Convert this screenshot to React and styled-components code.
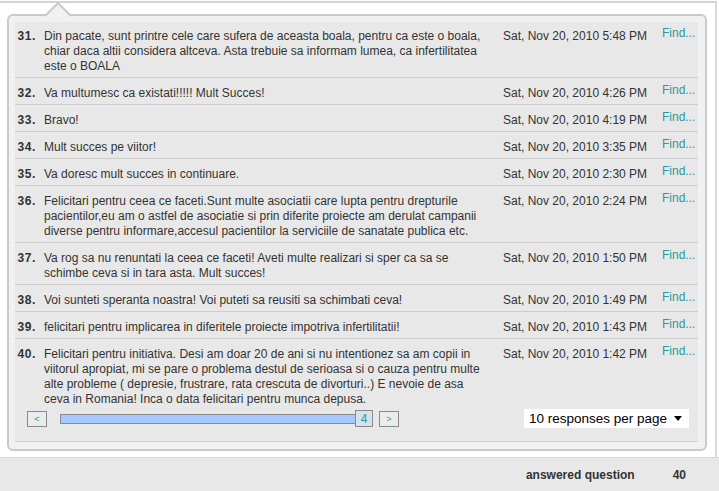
import * as React from 'react';
import styled, { createGlobalStyle } from 'styled-components';

const Global = createGlobalStyle`
body{
  margin:0;
  background:#ffffff;
  font-family:"Liberation Sans", Arial, sans-serif;
  font-size:12px;
  color:#333;
}
`;

const Page = styled.div`
width:719px;
height:491px;
display:flex;
flex-direction:column;
overflow:hidden;
`;
const Popup = styled.div`
margin-top:1px;
width:717px;
border-top:2px solid #d3d3d3;
border-right:2px solid #d9d9d9;
padding:11px 8px 6px 7px;
box-sizing:border-box;
`;
const Panel = styled.div`
position:relative;
border:2px solid #c9c9c9;
border-radius:6px;
background:#f1f1f1;
padding:6px 7px 7px 6px;
`;
const Arrow = styled.svg`
position:absolute;
left:35px;
top:-14px;
`;
const Inner = styled.div`
background:#e8e8e8;
border-bottom:1px solid #cfcfcf;
`;
const Row = styled.div`
display:grid;
grid-template-columns:29px 459px 159px 1fr;
padding:7.5px 0 ${p => (p.$last ? '0' : '3.5px')};
border-bottom:1px solid ${p => (p.$last ? 'transparent' : '#cdcdcd')};
line-height:15px;
&:first-child{
  padding-top:6.5px;
}
`;
const Num = styled.div`
font-weight:bold;
text-align:right;
padding-right:8px;
letter-spacing:0.6px;
color:#333;
`;
const Text = styled.div`
color:#333;
padding-right:13px;
`;
const Date = styled.div`
color:#333;
white-space:nowrap;
`;
const Find = styled.a`
color:#2b9a9a;
margin-top:-3px;
cursor:pointer;
`;
const Pager = styled.div`
display:flex;
align-items:center;
padding:2px 9px 13px 12px;
height:18px;
`;
const PageBtn = styled.div`
width:18px;
height:14px;
border:1px solid #8a8a8a;
background:#ececec;
color:#2b9a9a;
font-size:9px;
display:flex;
align-items:center;
justify-content:center;
`;
const Track = styled.div`
margin-left:13px;
width:295px;
height:8px;
border:1px solid #8a8a8a;
background:#a5c8ff;
`;
const Handle = styled.div`
width:16px;
height:15px;
margin-left:-2px;
margin-right:6px;
border:1px solid #8a8a8a;
background:#d5e2ee;
color:#2b9a9a;
font-size:12px;
display:flex;
align-items:center;
justify-content:center;
`;
const Select = styled.div`
margin-left:auto;
width:165px;
height:19px;
background:#fff;
display:flex;
align-items:center;
justify-content:space-between;
padding:0 7px 0 5px;
box-sizing:border-box;
font-size:13.5px;
color:#000;
`;
const Footer = styled.div`
flex:1;
background:#e8e8e8;
border-top:1px solid #d8d8d8;
display:flex;
justify-content:flex-end;
align-items:flex-start;
padding:10px 33px 0 0;
font-weight:bold;
color:#333;
`;
const Label = styled.span`
margin-right:38px;
`;

const rows = [
  [31, 'Din pacate, sunt printre cele care sufera de aceasta boala, pentru ca este o boala, chiar daca altii considera altceva. Asta trebuie sa informam lumea, ca infertilitatea este o BOALA', '5:48 PM'],
  [32, 'Va multumesc ca existati!!!!! Mult Succes!', '4:26 PM'],
  [33, 'Bravo!', '4:19 PM'],
  [34, 'Mult succes pe viitor!', '3:35 PM'],
  [35, 'Va doresc mult succes in continuare.', '2:30 PM'],
  [36, 'Felicitari pentru ceea ce faceti.Sunt multe asociatii care lupta pentru drepturile pacientilor,eu am o astfel de asociatie si prin diferite proiecte am derulat campanii diverse pentru informare,accesul pacientilor la serviciile de sanatate publica etc.', '2:24 PM'],
  [37, 'Va rog sa nu renuntati la ceea ce faceti! Aveti multe realizari si sper ca sa se schimbe ceva si in tara asta. Mult succes!', '1:50 PM'],
  [38, 'Voi sunteti speranta noastra! Voi puteti sa reusiti sa schimbati ceva!', '1:49 PM'],
  [39, 'felicitari pentru implicarea in diferitele proiecte impotriva infertilitatii!', '1:43 PM'],
  [40, 'Felicitari pentru initiativa. Desi am doar 20 de ani si nu intentionez sa am copii in viitorul apropiat, mi se pare o problema destul de serioasa si o cauza pentru multe alte probleme ( depresie, frustrare, rata crescuta de divorturi..) E nevoie de asa ceva in Romania! Inca o data felicitari pentru munca depusa.', '1:42 PM'],
];

export default function App() {
  return (
    <Page>
      <Global />
      <Popup>
        <Panel>
          <Arrow width="28" height="16" viewBox="0 0 28 16">
            <polygon points="1,15 14,1 27,15" fill="#f1f1f1" />
            <polyline points="1,14 14,1 27,14" fill="none" stroke="#c9c9c9" strokeWidth="2" />
          </Arrow>
          <Inner>
            {rows.map((r, i) => (
              <Row key={r[0]} $last={i === rows.length - 1}>
                <Num>{r[0]}.</Num>
                <Text>{r[1]}</Text>
                <Date>Sat, Nov 20, 2010 {r[2]}</Date>
                <Find>Find...</Find>
              </Row>
            ))}
            <Pager>
              <PageBtn>&lt;</PageBtn>
              <Track />
              <Handle>4</Handle>
              <PageBtn>&gt;</PageBtn>
              <Select>
                <span>10 responses per page</span>
                <svg width="8" height="5" viewBox="0 0 8 5"><polygon points="0,0 8,0 4,5" fill="#000" /></svg>
              </Select>
            </Pager>
          </Inner>
        </Panel>
      </Popup>
      <Footer>
        <Label>answered question</Label>
        <span>40</span>
      </Footer>
    </Page>
  );
}
